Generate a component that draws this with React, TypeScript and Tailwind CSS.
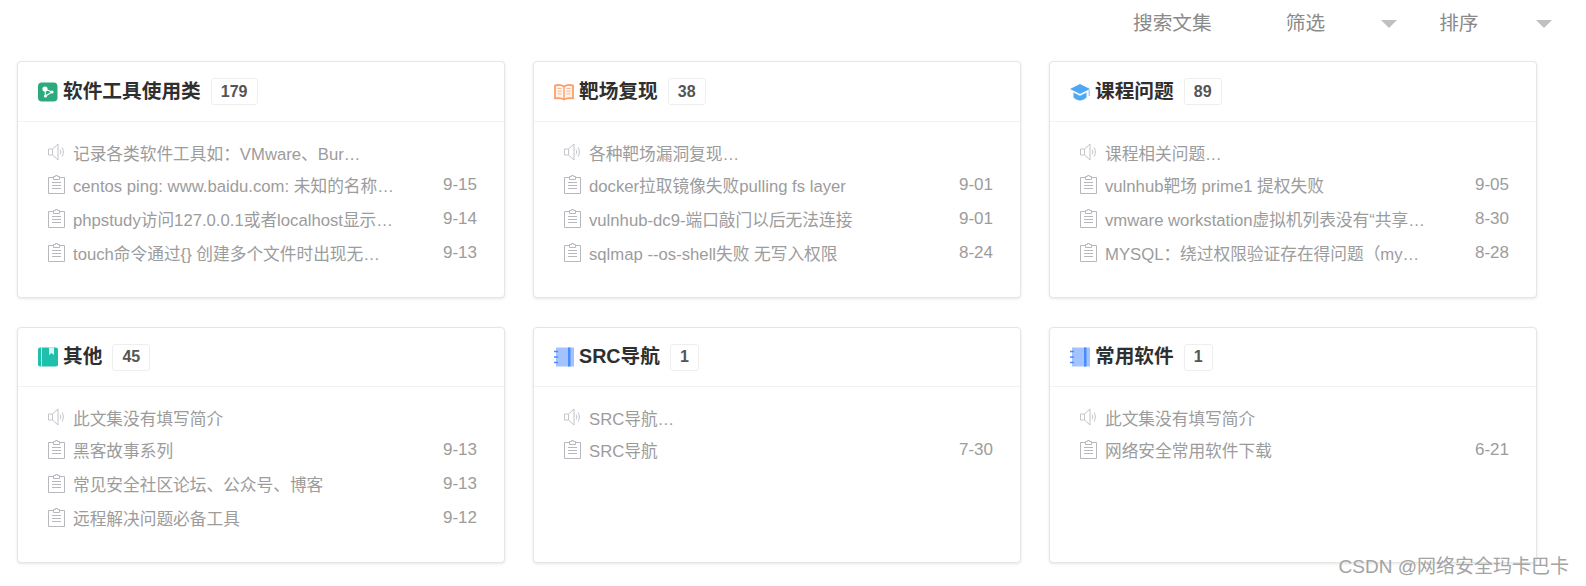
import React from "react";

interface Row {
  title: string;
  date: string;
}

interface Collection {
  icon: React.ReactNode;
  name: string;
  count: number;
  intro: string;
  rows: Row[];
}

function ShareIcon() {
  return (
    <svg width="20" height="20" viewBox="0 0 20 20">
      <rect x="0" y="0.5" width="19.5" height="19" rx="4" fill="#2bab7d" />
      <circle cx="7" cy="7" r="2.6" fill="#fff" />
      <circle cx="7.500" cy="14" r="1.600" fill="#fff" />
      <circle cx="14" cy="10" r="1.600" fill="#fff" />
      <path d="M7 7L14 10L7.500 14Z" fill="none" stroke="#fff" strokeWidth="1.100" />
    </svg>
  );
}

function OpenBookIcon() {
  return (
    <svg width="20" height="20" viewBox="0 0 20 20" fill="none">
      <path
        d="M1 3.5C4 2.6 7.500 2.800 10 4.500C12.500 2.800 16 2.600 19 3.500V16.500C16 15.800 12.500 16 10 17.500C7.500 16 4 15.800 1 16.500Z"
        fill="#fff3ea"
        stroke="#fb9a62"
        strokeWidth="1.700"
        strokeLinejoin="round"
      />
      <path d="M10 4.500V17.500" stroke="#fb9a62" strokeWidth="1.300" />
      <path
        d="M3.500 6.500H7.500M3.500 9.200H7.500M3.500 11.900H7.500M12.500 6.500H16.500M12.500 9.200H16.500M12.500 11.900H16.500"
        stroke="#fbb68c"
        strokeWidth="1"
      />
    </svg>
  );
}

function GradCapIcon() {
  return (
    <svg width="20" height="20" viewBox="0 0 20 20">
      <path d="M10 2L20 7L10 12L0 7Z" fill="#4ea9f5" />
      <path d="M3.500 10.500L10 13.800L16.500 10.500V15.500C14.500 17.500 12 18.500 10 18.500C8 18.500 5.500 17.500 3.500 15.500Z" fill="#4ea9f5" />
      <rect x="18.600" y="8" width="1.200" height="6" fill="#8cc6f7" />
    </svg>
  );
}

function BookmarkBookIcon() {
  return (
    <svg width="20" height="20" viewBox="0 0 20 20">
      <rect x="0" y="0.500" width="20" height="19" rx="2" fill="#20bfab" />
      <rect x="3" y="0.500" width="1" height="19" fill="#c4eee8" />
      <path d="M11 0.500H16V8L13.500 6L11 8Z" fill="#d8f5f0" />
    </svg>
  );
}

function NotebookIcon() {
  return (
    <svg width="20" height="20" viewBox="0 0 20 20">
      <rect x="2" y="0.500" width="18" height="19" fill="#a3c3ff" />
      <rect x="14" y="0.500" width="2.500" height="19" fill="#4a8bff" />
      <path d="M0 4.500H4M0 10H4M0 15.500H4" stroke="#4a8bff" strokeWidth="1.600" />
    </svg>
  );
}

function SpeakerIcon() {
  return (
    <svg className="mb-[2px]" width="17" height="18" viewBox="0 0 17 18" fill="none" stroke="#c4c4ca" strokeWidth="1">
      <path d="M0.500 6H4.500V12H0.500Z" />
      <path d="M4.500 6L10 1V17L4.500 12" strokeLinejoin="round" />
      <path d="M12 6.500C13 8 13 10 12 11.500" />
      <path d="M14 4.500C15.800 7 15.800 11 14 13.500" />
    </svg>
  );
}

function ClipboardIcon() {
  return (
    <svg width="17" height="19" viewBox="0 0 17 19" fill="none" stroke="#b9b7be" strokeWidth="1">
      <path d="M5.500 2.500H0.500V18.500H16.500V2.500H11.500" />
      <path d="M5.500 4.500V1.500H7.500V0.500H9.500V1.500H11.500V4.500Z" />
      <path d="M4 7.500H13M4 10.500H13M4 13.500H13" />
    </svg>
  );
}

function Triangle() {
  return (
    <span className="block w-0 h-0 border-x-[8px] border-x-transparent border-t-[8px] border-t-[#c0c0c0]"></span>
  );
}

const collections: Collection[] = [
  {
    icon: <ShareIcon />,
    name: "软件工具使用类",
    count: 179,
    intro: "记录各类软件工具如：VMware、Bur…",
    rows: [
      { title: "centos ping: www.baidu.com: 未知的名称…", date: "9-15" },
      { title: "phpstudy访问127.0.0.1或者localhost显示…", date: "9-14" },
      { title: "touch命令通过{} 创建多个文件时出现无…", date: "9-13" },
    ],
  },
  {
    icon: <OpenBookIcon />,
    name: "靶场复现",
    count: 38,
    intro: "各种靶场漏洞复现…",
    rows: [
      { title: "docker拉取镜像失败pulling fs layer", date: "9-01" },
      { title: "vulnhub-dc9-端口敲门以后无法连接", date: "9-01" },
      { title: "sqlmap --os-shell失败 无写入权限", date: "8-24" },
    ],
  },
  {
    icon: <GradCapIcon />,
    name: "课程问题",
    count: 89,
    intro: "课程相关问题…",
    rows: [
      { title: "vulnhub靶场 prime1 提权失败", date: "9-05" },
      { title: "vmware workstation虚拟机列表没有“共享…", date: "8-30" },
      { title: "MYSQL：绕过权限验证存在得问题（my…", date: "8-28" },
    ],
  },
  {
    icon: <BookmarkBookIcon />,
    name: "其他",
    count: 45,
    intro: "此文集没有填写简介",
    rows: [
      { title: "黑客故事系列", date: "9-13" },
      { title: "常见安全社区论坛、公众号、博客", date: "9-13" },
      { title: "远程解决问题必备工具", date: "9-12" },
    ],
  },
  {
    icon: <NotebookIcon />,
    name: "SRC导航",
    count: 1,
    intro: "SRC导航…",
    rows: [{ title: "SRC导航", date: "7-30" }],
  },
  {
    icon: <NotebookIcon />,
    name: "常用软件",
    count: 1,
    intro: "此文集没有填写简介",
    rows: [{ title: "网络安全常用软件下载", date: "6-21" }],
  },
];

function Card({ item, firstRow }: { item: Collection; firstRow: boolean }) {
  return (
    <div className="h-full bg-white border border-[#e6e6e6] rounded-[4px] shadow-[0_1px_3px_rgba(0,0,0,0.1)]">
      {/* header */}
      <div className={`${firstRow ? "h-[60px]" : "h-[59px]"} flex items-center pl-[20px] border-b border-[#f2f2f2]`}>
        {item.icon}
        <span className="ml-[5px] text-[19.7px] font-bold text-[#2f2f2f]">{item.name}</span>
        <span className="ml-[10px] h-[27px] px-[9px] flex items-center border border-[#eeeeee] rounded-[3px] text-[16px] font-bold text-[#555555]">
          {item.count}
        </span>
      </div>

      {/* list */}
      <div className="pt-[21px] pl-[30px] pr-[27px]">
        <div className="h-[20px] flex items-center gap-[8px] text-[16.7px] text-[#9c9c9c]">
          <SpeakerIcon />
          <span className="w-[330px] truncate leading-[20px] pt-[4px]">{item.intro}</span>
        </div>
        <ul className="mt-[11px] flex flex-col gap-[14px]">
          {item.rows.map((row, id) => (
            <li key={id} className="h-[20px] flex items-center justify-between text-[16.7px] text-[#9c9c9c]">
              <div className="flex items-center gap-[8px]">
                <ClipboardIcon />
                <span className="w-[340px] truncate leading-[20px] pt-[5px]">{row.title}</span>
              </div>
              <span className="text-[17px] leading-[20px] pt-[1px]">{row.date}</span>
            </li>
          ))}
        </ul>
      </div>
    </div>
  );
}

export default function App() {
  return (
    <div
      className="relative w-[1586px] h-[586px] overflow-hidden bg-white"
      style={{ fontFamily: '"Liberation Sans", "Noto Sans CJK SC", sans-serif' }}
    >
      {/* top bar */}
      <div className="h-[61px] pb-[14px] flex items-center text-[19.7px] text-[#8a8a8a]">
        <span className="ml-[1133px]">搜索文集</span>
        <span className="ml-[74px]">筛选</span>
        <span className="ml-[56px]"><Triangle /></span>
        <span className="ml-[42px]">排序</span>
        <span className="ml-[57px]"><Triangle /></span>
      </div>

      {/* cards */}
      <div className="pl-[17px] grid grid-cols-[488px_488px_488px] grid-rows-[237px_236px] gap-x-[28px] gap-y-[29px]">
        {collections.map((item, id) => (
          <Card item={item} firstRow={id < 3} key={id} />
        ))}
      </div>

      {/* watermark */}
      <div className="absolute right-[17px] top-[555px] text-[19px] leading-[24px] text-[#a3a3a3]">
        CSDN @网络安全玛卡巴卡
      </div>
    </div>
  );
}
